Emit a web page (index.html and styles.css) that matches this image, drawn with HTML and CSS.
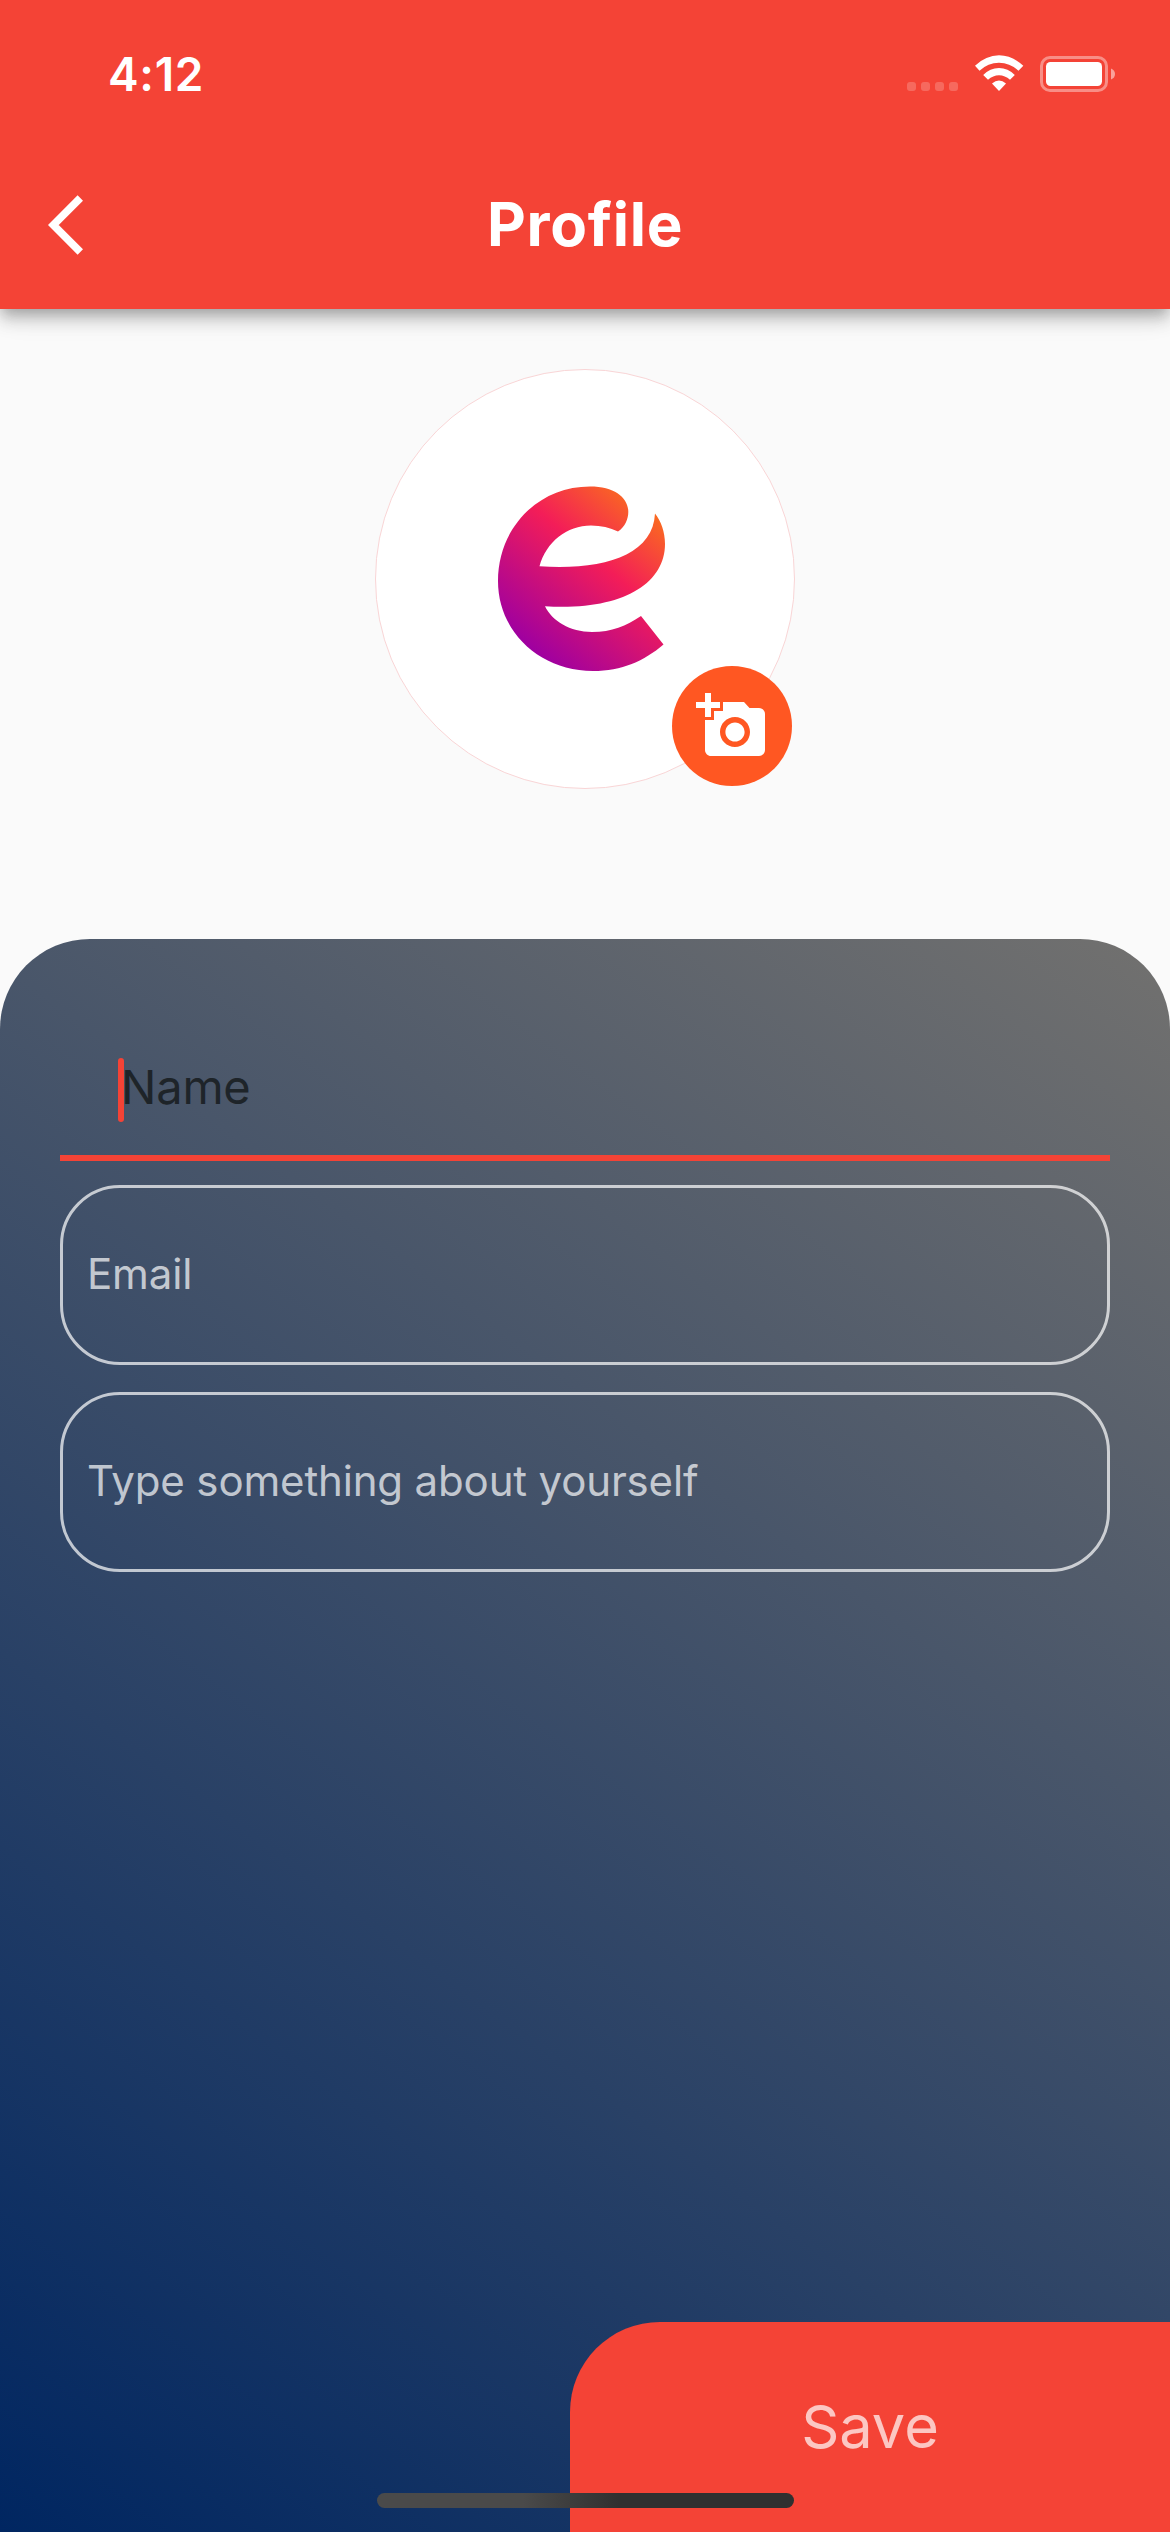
FILE: index.html
```html
<!DOCTYPE html>
<html lang="en">
<head>
<meta charset="utf-8">
<title>Profile</title>
<link rel="stylesheet" href="styles.css">
</head>
<body>
<div class="screen">
  <header class="app-bar">
    <div class="status-bar">
      <span class="clock">4:12</span>
      <svg class="status-icons" viewBox="0 0 210 38" width="210" height="38" fill="#fff">
        <g opacity=".2">
          <rect x="0" y="27" width="9" height="9" rx="3"/>
          <rect x="14" y="27" width="9" height="9" rx="3"/>
          <rect x="28" y="27" width="9" height="9" rx="3"/>
          <rect x="42" y="27" width="9" height="9" rx="3"/>
        </g>
        <path d="M68 10.800Q79 .3 92 .3T116.300 10.800L111.500 15.800Q103 7.800 92 7.800T72.500 15.800Z"/>
        <path d="M76.200 20Q83 13 92 13T107.800 20L103 24.800Q98 20.200 92 20.200T81 24.800Z"/>
        <path d="M85 28.500Q92 22.500 99 28.500L92 36Z"/>
        <rect x="134.500" y="2.500" width="65" height="33" rx="8.500" fill="none" stroke="#fff" stroke-width="3" opacity=".4"/>
        <rect x="139" y="7" width="56" height="24" rx="4.500"/>
        <path d="M204 13.500Q208 15 208 19T204 24.500Z" opacity=".5"/>
      </svg>
    </div>
    <div class="toolbar">
      <svg class="back" viewBox="0 0 36 62" width="36" height="62"><path d="M32.300 4 5.300 31l27 27" fill="none" stroke="#fff" stroke-width="7.600"/></svg>
      <h1 class="title">Profile</h1>
    </div>
  </header>

  <section class="photo">
    <div class="avatar">
      <svg class="logo" viewBox="0 0 230 230" width="230" height="230">
        <defs>
          <linearGradient id="brand" gradientUnits="userSpaceOnUse" x1="57" y1="185" x2="175" y2="45">
            <stop offset="0" stop-color="#9f00a0"/>
            <stop offset=".6" stop-color="#f31d58"/>
            <stop offset="1" stop-color="#fa6a20"/>
          </linearGradient>
        </defs>
        <path fill="url(#brand)" d="M148 71.500C155 67 158.300 59 158.300 52C158.300 38 145 26.500 120 26.500C68 26.500 28 68 28 121C28 172 70 211 123 211C152 211 174 201 193.500 184.500L171 156C156 166 142 172 122 172C100 172 82 161 75 146.300C150 151 195 125 195 84C195 72 191 61 185 53.500C183 96 132 110.500 69.500 106.300C76 82 97 65.500 121 65.500Q136 65.500 148 71.500Z"/>
      </svg>
      <button class="add-photo" aria-label="Add photo">
        <svg viewBox="0 0 24 24" width="72" height="72" fill="#fff"><path d="M3 4V1h2v3h3v2H5v3H3V6H0V4h3zm3 6V7h3V4h7l1.830 2H21c1.100 0 2 .9 2 2v12c0 1.100-.9 2-2 2H5c-1.100 0-2-.9-2-2V10h3zm7 9c2.760 0 5-2.240 5-5s-2.240-5-5-5-5 2.240-5 5 2.240 5 5 5zm-3.200-5c0 1.770 1.430 3.200 3.200 3.200s3.200-1.430 3.200-3.200-1.430-3.200-3.200-3.200-3.200 1.430-3.200 3.200z"/></svg>
      </button>
    </div>
  </section>

  <main class="panel">
    <form class="form">
      <div class="name-field"><span class="caret"></span><span class="name-hint">Name</span></div>
      <div class="field email">Email</div>
      <div class="field about">Type something about yourself</div>
    </form>
    <div class="save">Save</div>
  </main>
  <div class="home-indicator"></div>
</div>
</body>
</html>
```
FILE: styles.css
```css
* { box-sizing: border-box; }

body {
  margin: 0;
  font-family: Inter, "Liberation Sans", sans-serif;
}

.screen {
  position: relative;
  display: flex;
  flex-direction: column;
  width: 1170px;
  height: 2532px;
  overflow: hidden;
  background: #fafafa;
}

.app-bar {
  flex: none;
  height: 309px;
  background: #f44336;
  color: #fff;
  box-shadow: 0 6px 12px -3px rgba(0, 0, 0, .2), 0 12px 15px rgba(0, 0, 0, .14), 0 3px 30px rgba(0, 0, 0, .12);
}

.status-bar {
  display: flex;
  justify-content: space-between;
  align-items: center;
  height: 141px;
  padding: 6px 53px 0 108px;
}

.clock {
  font-size: 46px;
  font-weight: 600;
  letter-spacing: .7px;
  line-height: 56px;
}

.toolbar {
  display: grid;
  grid-template-columns: 168px 1fr 168px;
  align-items: center;
  height: 168px;
}

.back { margin-left: 48px; }

.title {
  margin: 0;
  padding-bottom: 2px;
  text-align: center;
  font-size: 60px;
  font-weight: 700;
  letter-spacing: .7px;
  line-height: 72px;
}

.photo {
  display: flex;
  justify-content: center;
  flex: none;
  height: 630px;
  padding-top: 60px;
}

.avatar {
  position: relative;
  width: 420px;
  height: 420px;
  padding: 91px 95px;
  border: 1px solid #f9d5d6;
  border-radius: 50%;
  background: #fff;
}

.logo { display: block; margin: -1px; }

.add-photo {
  position: absolute;
  right: 2px;
  bottom: 2px;
  display: flex;
  align-items: center;
  justify-content: center;
  width: 120px;
  height: 120px;
  padding: 0;
  border: 0;
  border-radius: 50%;
  background: #ff5722;
}

.panel {
  display: flex;
  flex: 1;
  flex-direction: column;
  justify-content: space-between;
  border-radius: 90px 90px 0 0;
  background: linear-gradient(36.3deg, #002661, #72716f);
}

.form { padding: 90px 60px 0; }

.name-field {
  display: flex;
  align-items: center;
  height: 132px;
  padding: 0 0 4px 58px;
  margin-bottom: 24px;
  border-bottom: 6px solid #f44336;
}

.caret {
  width: 6px;
  height: 64px;
  border-radius: 3px;
  background: #f44336;
}

.name-hint {
  margin-left: -3px;
  padding-bottom: 7px;
  color: #1e2429;
  font-size: 47px;
  letter-spacing: -.2px;
}

.field {
  height: 180px;
  margin-bottom: 27px;
  padding: 0 24px;
  border: 3px solid rgba(255, 255, 255, .7);
  border-radius: 60px;
  color: rgba(255, 255, 255, .7);
  font-size: 42px;
  letter-spacing: -.15px;
  line-height: 172px;
}

.save {
  align-self: flex-end;
  width: 600px;
  height: 210px;
  border-top-left-radius: 90px;
  background: #f44336;
  color: rgba(255, 255, 255, .7);
  font-size: 59.5px;
  line-height: 208px;
  text-align: center;
}

.home-indicator {
  position: absolute;
  left: 377px;
  bottom: 24px;
  width: 417px;
  height: 15px;
  border-radius: 8px;
  background: linear-gradient(90deg, #4a4a4a 35%, #303030 58%);
}
```
